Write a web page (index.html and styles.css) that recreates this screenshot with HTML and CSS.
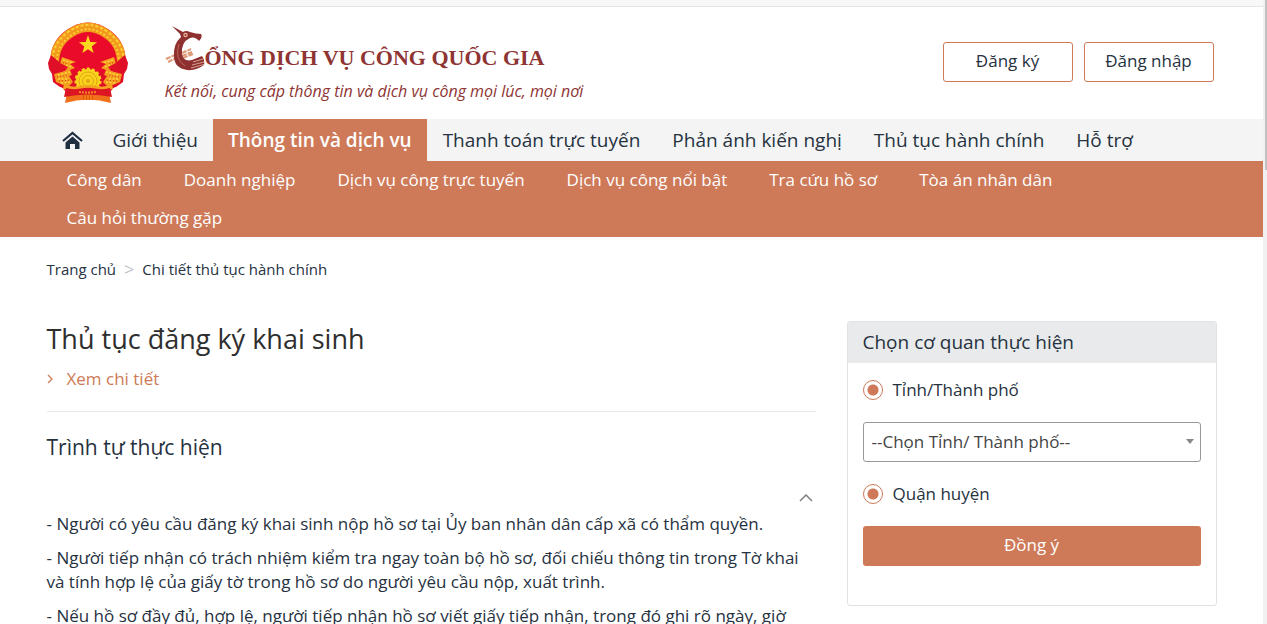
FILE: index.html
```html
<!DOCTYPE html>
<html lang="vi">
<head>
<meta charset="utf-8">
<meta name="viewport" content="width=device-width, initial-scale=1">
<title>Cổng Dịch vụ công Quốc gia</title>
<link rel="stylesheet" href="styles.css">
</head>
<body>
<div class="topline"></div>
<header class="header container">
  <svg class="emblem" viewBox="0 0 80 82" aria-hidden="true">
    <path d="M20 66 L17 81 Q40 74 63 81 L60 66 Z" fill="#f0701c"/>
    <path d="M3 44 Q0 20 20 7 Q40 -6 60 7 Q80 20 77 44 L72 58 L62 70 H18 L8 58 Z" fill="#ea0a2a"/>
    <path d="M3 41 Q0 22 19 8 Q40 -7 61 8 Q80 22 77 41 L69 45 Q70 24 55 15 Q40 5 25 15 Q10 24 11 45 Z" fill="#f39a1c"/>
    <path d="M5 41 Q3 23 20 10 Q40 -4 60 10 Q77 23 75 41" fill="none" stroke="#fbd034" stroke-width="2" stroke-dasharray="3 2"/>
    <path d="M9 42 Q8 24 23 13.500 Q40 1 57 13.500 Q72 24 71 42" fill="none" stroke="#fbd034" stroke-width="2" stroke-dasharray="2 2"/>
    <path d="M3 33 L0 41 L1 47 L4 52 L5 60 L12 65 L22 68 H58 L68 65 L75 60 L76 52 L79 47 L80 41 L77 33 L64 44 L56 50 H24 L16 44 Z" fill="#e00f28"/>
    <path d="M14 35 L28 40 L22 42 L27 46 L22 48 L24 53 L21 54 L25 60 L20 65 L8 60 L6 52 L17 49 L20 45 L12 41 Z" fill="#f49d1e"/>
    <path d="M66 35 L52 40 L58 42 L53 46 L58 48 L56 53 L59 54 L55 60 L60 65 L72 60 L74 52 L63 49 L60 45 L68 41 Z" fill="#f49d1e"/>
    <path d="M15 38 L25 41 M18 43 L24 45 M10 53 L22 50 M10 57 L21 57 M13 61 L22 60 M65 38 L55 41 M62 43 L56 45 M70 53 L58 50 M70 57 L59 57 M67 61 L58 60" fill="none" stroke="#fbd940" stroke-width="1.500" stroke-dasharray="2 1.500"/>
    <path d="M12 40 L20 42 M9 55 L20 53 M11 59 L22 58 M68 40 L60 42 M71 55 L60 53 M69 59 L58 58" fill="none" stroke="#cf3d10" stroke-width="1" stroke-dasharray="1 2"/>
    <path d="M40 13 L42.300 20 L49 20.200 L43.700 24.500 L45.600 31 L40 27.200 L34.400 31 L36.300 24.500 L31 20.200 L37.700 20 Z" fill="#ffd91f"/>
    <circle cx="40" cy="59" r="12" fill="#f8d31c" stroke="#f8d31c" stroke-width="3" stroke-dasharray="3 2"/>
    <circle cx="40" cy="59" r="9" fill="none" stroke="#e5a416" stroke-width="1"/>
    <circle cx="40" cy="59" r="5.500" fill="none" stroke="#e5a416" stroke-width="1"/>
    <circle cx="40" cy="59" r="2" fill="#e5a416"/>
    <path d="M16 62 Q24 66 32 64 Q40 62 48 64 Q56 66 64 62 L65 67 Q40 71 15 67 Z" fill="#f5a421"/>
    <path d="M18 66 Q24 68 33 66.500 Q40 65 47 66.500 Q56 68 62 66 L64 75 Q40 70 16 75 Z" fill="#dc1623"/>
    <path d="M31 70 Q40 71 49 70" fill="none" stroke="#f38b25" stroke-width="2" stroke-dasharray="2 1"/>
    <path d="M35 73 H45 V78 H35 Z" fill="#e4500f"/>
    <path d="M37 73 V78 M40 73 V78 M43 73 V78" stroke="#f9a81b" stroke-width="1"/>
  </svg>
  <div class="brand">
    <div class="brand-title">
      <svg class="bird" viewBox="0 0 40 46" aria-hidden="true">
        <path d="M1 33 L10 29 M3 36 L11 32 M17 27 L26 23 M17 30 L27 26 M18 32 L28 28" stroke="#dd9a78" stroke-width="2" stroke-dasharray="5 1"/>
        <path d="M7 0 L18 6 Q21 4 25 6 Q31 8 36 8 Q38 11 34 15 Q30 10 25 12 Q16 16 17 28 Q18 36 27 34 L37 30 Q40 34 39 39 Q31 45 22 44 Q9 42 9 30 Q8 18 16 11 L15 8 Z" fill="#8e302f"/>
        <path d="M14 18 Q9 33 20 40" fill="none" stroke="#bd6654" stroke-width="1"/>
        <circle cx="20.500" cy="9" r="2.200" fill="#e9b7a4"/>
        <circle cx="20.500" cy="9" r="1" fill="#a42b27"/>
        <path d="M28 36 L38 33 M27 39 L39 36 M26 42 L39 38.500" stroke="#e9c2b2" stroke-width="0.800"/>
      </svg>
      <span>ỔNG DỊCH VỤ CÔNG QUỐC GIA</span>
    </div>
    <p class="slogan">Kết nối, cung cấp thông tin và dịch vụ công mọi lúc, mọi nơi</p>
  </div>
  <div class="account">
    <button class="btn-outline" type="button">Đăng ký</button>
    <button class="btn-outline" type="button">Đăng nhập</button>
  </div>
</header>
<nav class="mainnav" aria-label="Chính">
  <div class="container mainnav-list">
    <a class="nav-link" href="#" aria-label="Trang chủ"><svg class="home" viewBox="0 0 21 19" aria-hidden="true"><path d="M1 10 L10.500 2 L20 10" fill="none" stroke="#1e2f41" stroke-width="2.200"/><path d="M10.500 5.500 L17.500 11.500 V18 H13 V13 H8 V18 H3.500 V11.500 Z" fill="#1e2f41"/></svg></a>
    <a class="nav-link" href="#">Giới thiệu</a>
    <a class="nav-link active" href="#">Thông tin và dịch vụ</a>
    <a class="nav-link" href="#">Thanh toán trực tuyến</a>
    <a class="nav-link" href="#">Phản ánh kiến nghị</a>
    <a class="nav-link" href="#">Thủ tục hành chính</a>
    <a class="nav-link" href="#">Hỗ trợ</a>
  </div>
</nav>
<nav class="subnav" aria-label="Thông tin và dịch vụ">
  <div class="container subnav-list">
    <a class="sub-link" href="#">Công dân</a>
    <a class="sub-link" href="#">Doanh nghiệp</a>
    <a class="sub-link" href="#">Dịch vụ công trực tuyến</a>
    <a class="sub-link" href="#">Dịch vụ công nổi bật</a>
    <a class="sub-link" href="#">Tra cứu hồ sơ</a>
    <a class="sub-link" href="#">Tòa án nhân dân</a>
    <a class="sub-link" href="#">Câu hỏi thường gặp</a>
  </div>
</nav>
<div class="container">
  <div class="crumbs"><a href="#">Trang chủ</a><span class="crumb-sep">&gt;</span><a href="#">Chi tiết thủ tục hành chính</a></div>
  <div class="columns">
    <main class="content">
      <h1 class="title">Thủ tục đăng ký khai sinh</h1>
      <a class="detail" href="#"><svg class="chev" viewBox="0 0 6 10" aria-hidden="true"><path d="M1 1 L5 5 L1 9" fill="none" stroke="#ce7a58" stroke-width="1.300"/></svg>Xem chi tiết</a>
      <h2 class="subtitle">Trình tự thực hiện</h2>
      <div class="collapse-row"><button class="collapse" type="button" aria-label="Thu gọn"><svg class="collapse-icon" viewBox="0 0 14 8" aria-hidden="true"><path d="M1 7 L7 1 L13 7" fill="none" stroke="#808080" stroke-width="1.500"/></svg></button></div>
      <p class="text">- Người có yêu cầu đăng ký khai sinh nộp hồ sơ tại Ủy ban nhân dân cấp xã có thẩm quyền.</p>
      <p class="text">- Người tiếp nhận có trách nhiệm kiểm tra ngay toàn bộ hồ sơ, đối chiếu thông tin trong Tờ khai và tính hợp lệ của giấy tờ trong hồ sơ do người yêu cầu nộp, xuất trình.</p>
      <p class="text">- Nếu hồ sơ đầy đủ, hợp lệ, người tiếp nhận hồ sơ viết giấy tiếp nhận, trong đó ghi rõ ngày, giờ</p>
    </main>
    <form class="panel">
      <h2 class="panel-head">Chọn cơ quan thực hiện</h2>
      <div class="panel-body">
        <label class="option"><input class="radio" type="radio" name="province" checked>Tỉnh/Thành phố</label>
        <div class="select-wrap">
          <select class="select" aria-label="Tỉnh/Thành phố"><option>--Chọn Tỉnh/ Thành phố--</option></select>
          <svg class="caret" viewBox="0 0 8 5" aria-hidden="true"><path d="M0 0 H8 L4 5 Z" fill="#888"/></svg>
        </div>
        <label class="option"><input class="radio" type="radio" name="district" checked>Quận huyện</label>
        <button class="btn-primary" type="button">Đồng ý</button>
      </div>
    </form>
  </div>
</div>
<div class="scrolltrack" aria-hidden="true"><div class="scrollthumb"></div></div>
</body>
</html>
```
FILE: styles.css
```css
* { box-sizing: border-box; }
body {
  margin: 0;
  padding-right: 4px;
  height: 100vh;
  overflow: hidden;
  background: #fff;
  color: #26323f;
  font-family: "Open Sans", "Noto Sans", sans-serif;
  font-size: 16px;
  line-height: 24px;
}
a { color: inherit; text-decoration: none; }
h1, h2, p { margin: 0; font-weight: 400; }
button, select { font: inherit; color: inherit; }
.container { max-width: 1170px; margin: 0 auto; }
.topline { height: 7px; background: #f8f8f8; border-bottom: 1px solid #e4e4e4; }
.header { display: flex; align-items: flex-start; height: 112px; padding-top: 15px; }
.emblem { width: 80px; height: 82px; margin-left: 1px; flex: none; }
.brand { margin-left: 37px; padding-top: 4px; color: #8e3433; }
.brand-title {
  display: flex;
  align-items: flex-end;
  height: 46px;
  font: 700 22px/28px "Liberation Serif", serif;
  white-space: nowrap;
}
.bird { width: 40px; height: 46px; flex: none; }
.slogan { padding-top: 7px; font-size: 16px; font-style: italic; }
.account { display: flex; gap: 11px; margin-left: auto; padding: 20px 3px 0 0; }
.btn-outline {
  width: 130px;
  height: 40px;
  padding: 0 0 2px;
  border: 1px solid #ce7a58;
  border-radius: 3px;
  background: #fff;
  font-size: 17px;
}
.mainnav { background: #f4f4f4; }
.mainnav-list { display: flex; }
.nav-link {
  display: flex;
  align-items: center;
  height: 42px;
  padding: 0 15px;
  font-size: 19px;
  white-space: nowrap;
}
.nav-link.active { background: #ce7a58; color: #fff; font-weight: 600; }
.nav-link.active ~ .nav-link { padding: 0 16px; }
.home { width: 21px; height: 19px; }
.subnav { background: #ce7a58; color: #fff; }
.subnav-list { display: flex; flex-wrap: wrap; column-gap: 42px; padding: 0 20px; }
.sub-link { font-size: 17px; line-height: 38px; }
.crumbs { display: flex; gap: 8px; padding-top: 20px; font-size: 15px; }
.crumb-sep { color: #bfc2cc; font-size: 18px; }
.columns { display: grid; grid-template-columns: 1fr 370px; gap: 31px; align-items: start; padding-top: 40px; }
.title { color: #2e2e2e; font-size: 27px; line-height: 36px; }
.detail {
  display: flex;
  align-items: center;
  gap: 14px;
  padding: 10px 0 20px;
  border-bottom: 1px solid #e8e8e8;
  color: #ce7a58;
  font-size: 17px;
}
.chev { width: 6px; height: 10px; }
.subtitle { padding-top: 20px; font-size: 21px; line-height: 30px; }
.collapse-row { display: flex; justify-content: flex-end; padding: 32px 3px 10px; }
.collapse { display: flex; padding: 0; border: 0; background: none; }
.collapse-icon { width: 14px; height: 8px; }
.text { margin-bottom: 10px; font-size: 17px; }
.panel { border: 1px solid #e0e2e4; border-radius: 3px; }
.panel-head { padding: 0 15px; background: #e8eaeb; font-size: 19px; line-height: 41px; }
.panel-body { padding: 15px 15px 39px; }
.option { display: flex; align-items: center; gap: 10px; font-size: 17px; }
.radio {
  appearance: none;
  width: 20px;
  height: 20px;
  margin: 0;
  border: 1px solid #ce7a58;
  border-radius: 50%;
  background: radial-gradient(circle, #ce7a58 5px, #fff 6px);
}
.select-wrap { position: relative; margin: 20px 0; }
.select {
  appearance: none;
  display: block;
  width: 100%;
  height: 40px;
  padding: 0 8px;
  border: 1px solid #999;
  border-radius: 3px;
  background: #fff;
  color: #444;
  font-size: 17px;
}
.caret { position: absolute; top: 17px; right: 7px; width: 8px; height: 5px; pointer-events: none; }
.btn-primary {
  display: block;
  width: 100%;
  height: 40px;
  margin-top: 20px;
  padding: 0 0 2px;
  border: 0;
  border-radius: 3px;
  background: #ce7a58;
  color: #fff;
  font-size: 17px;
}
.scrolltrack { position: fixed; top: 0; right: 0; bottom: 0; width: 4px; background: #f1f1f1; }
.scrollthumb { width: 2px; height: 170px; margin-left: auto; background: #c1c1c1; }
```
